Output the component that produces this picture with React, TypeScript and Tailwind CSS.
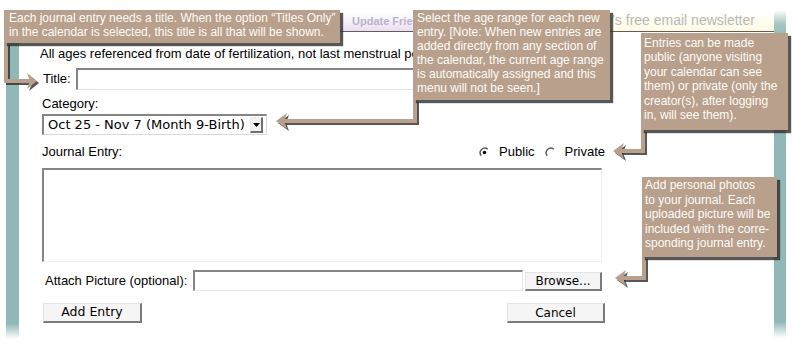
import React from "react";

const TAN = "bg-[#b9a08c]";

function Radio({ checked }: { checked?: boolean }) {
  return (
    <svg width="11" height="11" viewBox="0 0 11 11" className="flex-none">
      <path d="M2.2 8.8 A4.7 4.7 0 0 1 8.8 2.2" stroke="#5a5a5a" strokeWidth="1.4" fill="none" />
      {checked && <circle cx="5.5" cy="5.5" r="1.7" fill="#000" />}
    </svg>
  );
}

function Connectors() {
  const tan = "#b9a08c";
  const sh = "rgba(45,45,45,0.8)";
  const lines = [
    "M6 43 V81 H31",
    "M415 100 V121 H284",
    "M643 130 V151 H620",
    "M644 257 V278 H622",
  ];
  const heads = [
    "37,81 27,73 30,81 27,89",
    "276,121 287,113 284,121 287,129",
    "613,151 624,143 621,151 624,159",
    "615,278 626,270 623,278 626,286",
  ];
  return (
    <svg className="absolute left-0 top-0 pointer-events-none" width="792" height="360" viewBox="0 0 792 360">
      {lines.map((d, i) => (
        <path key={"s" + i} d={d} transform="translate(2,2)" stroke={sh} strokeWidth="4" fill="none" />
      ))}
      {heads.map((p, i) => (
        <polygon key={"hs" + i} points={p} transform="translate(2,2)" fill={sh} />
      ))}
      {lines.map((d, i) => (
        <path key={"l" + i} d={d} stroke={tan} strokeWidth="4" fill="none" />
      ))}
      {heads.map((p, i) => (
        <polygon key={"h" + i} points={p} fill={tan} />
      ))}
    </svg>
  );
}

const calloutBase =
  "absolute text-[12px] text-[#fdfbf8] whitespace-nowrap shadow-[3px_3px_1px_rgba(45,45,45,0.8)] " + TAN;

export default function App() {
  return (
    <div className="relative w-[792px] h-[360px] overflow-hidden bg-white text-black font-['Liberation_Sans',Arial,sans-serif]">
      <div className="flex h-full">
        <div className="w-[6px] flex-none" />
        <div className="w-[13px] flex-none mt-[28px] h-[311px] bg-[linear-gradient(to_bottom,#8fb8b6_0%,#8fb8b6_95%,#ffffff_100%)]" />
        <div className="flex-1 min-w-0">
          {/* top strip */}
          <div className="mt-[8px] ml-[321px] w-[434px] h-[24px] flex border-b border-[#5e5e5e]">
            <div className="w-[266px] flex items-center pt-[3px] pl-[12px] bg-[linear-gradient(to_bottom,#ffffff_20%,#e9def2_100%)]">
              <span className="block w-[61px] overflow-hidden text-[11px] font-bold text-[#bbb2ca] whitespace-nowrap">Update Friends</span>
            </div>
            <div className="flex-1 flex items-center pt-[1px] pl-[6px] bg-[linear-gradient(to_bottom,#ffffff_10%,#fffbe2_100%)]">
              <span className="text-[14px] text-[#b9b9b9] whitespace-nowrap">’s free email newsletter</span>
            </div>
          </div>

          {/* form */}
          <div className="pl-[23px]">
            <div className="mt-[14px] w-[373px] overflow-hidden h-[16px] leading-[16px] text-[13px] -ml-[2px] whitespace-nowrap">
              All ages referenced from date of fertilization, not last menstrual period (LMP).
            </div>

            <div className="mt-[6px] flex items-center h-[22px]">
              <label className="w-[34px] pl-[1px] text-[13px] leading-[16px]">Title:</label>
              <input
                type="text"
                className="w-[526px] h-[22px] bg-white border-t-2 border-l-2 border-r border-b border-t-[#858585] border-l-[#858585] border-r-[#e2e2e2] border-b-[#e2e2e2] outline-none"
              />
            </div>

            <div className="mt-[6px] h-[16px] leading-[16px] text-[13px]">Category:</div>

            <div className="mt-[2px] w-[225px] h-[21px] flex items-center bg-white border-t-2 border-l-2 border-r border-b border-t-[#858585] border-l-[#858585] border-r-[#d8d8d8] border-b-[#d8d8d8]">
              <span className="pl-[4px] text-[13px] leading-[16px] whitespace-nowrap font-['DejaVu_Sans',sans-serif]">
                Oct 25 - Nov 7 (Month 9-Birth)
              </span>
              <div className="ml-auto mr-[3px] w-[13px] h-[16px] flex items-center justify-center bg-[#f2f2f2] border-t border-l border-t-[#e8e8e8] border-l-[#e8e8e8] border-r-2 border-b-2 border-r-[#6f6f6f] border-b-[#6f6f6f]">
                <svg width="7" height="4" viewBox="0 0 7 4">
                  <polygon points="0,0 7,0 3.5,4" fill="#000" />
                </svg>
              </div>
            </div>

            <div className="mt-[9px] h-[16px] w-[563px] flex items-center text-[13px] leading-[16px]">
              <span>Journal Entry:</span>
              <div className="ml-auto flex items-center">
                <Radio checked />
                <span className="ml-[9px]">Public</span>
                <span className="ml-[10px] flex items-center">
                  <Radio />
                </span>
                <span className="ml-[9px]">Private</span>
              </div>
            </div>

            <textarea className="block mt-[8px] w-[560px] h-[94px] resize-none bg-white border-t-2 border-l-2 border-r border-b border-t-[#858585] border-l-[#858585] border-r-[#f0f0f0] border-b-[#f0f0f0] outline-none" />

            <div className="mt-[8px] flex items-end h-[21px]">
              <label className="self-center ml-[3px] w-[148px] text-[13px] leading-[16px] whitespace-nowrap">
                Attach Picture (optional):
              </label>
              <input
                type="text"
                className="w-[330px] h-[21px] bg-white border-t-2 border-l-2 border-r border-b border-t-[#858585] border-l-[#858585] border-r-[#e6e6e6] border-b-[#e6e6e6] outline-none"
              />
              <button className="ml-[2px] w-[77px] h-[19px] flex items-center justify-center bg-[#f5f5f5] border-t border-l border-t-[#e4e4e4] border-l-[#e4e4e4] border-r-2 border-b-2 border-r-[#7a7a7a] border-b-[#7a7a7a] text-[12px] font-['DejaVu_Sans',sans-serif]">
                Browse...
              </button>
            </div>

            <div className="mt-[12px] ml-[1px] w-[562px] flex justify-between">
              <button className="w-[99px] h-[20px] flex items-center justify-center bg-[#f5f5f5] border-t border-l border-t-[#e4e4e4] border-l-[#e4e4e4] border-r-2 border-b-2 border-r-[#7a7a7a] border-b-[#7a7a7a] text-[12.5px] font-['DejaVu_Sans',sans-serif]">
                Add Entry
              </button>
              <button className="w-[98px] h-[20px] flex items-center justify-center bg-[#f5f5f5] border-t border-l border-t-[#e4e4e4] border-l-[#e4e4e4] border-r-2 border-b-2 border-r-[#7a7a7a] border-b-[#7a7a7a] text-[12px] font-['DejaVu_Sans',sans-serif]">
                Cancel
              </button>
            </div>
          </div>
        </div>
        <div className="w-[12px] flex-none mt-[10px] h-[328px] bg-[linear-gradient(to_bottom,#ffffff_0%,#a9c9c5_4%,#8fb8b6_9%,#8fb8b6_95%,#ffffff_100%)]" />
        <div className="w-[6px] flex-none" />
      </div>

      <Connectors />

      <div className={calloutBase + " left-[4px] top-[10px] w-[336px] h-[33px] pl-[5px] pt-[1px] leading-[14px]"}>
        Each journal entry needs a title. When the option “Titles Only”
        <br />
        in the calendar is selected, this title is all that will be shown.
      </div>

      <div className={calloutBase + " left-[413px] top-[10px] w-[197px] h-[90px] pl-[4px] pt-[1px] leading-[14px]"}>
        Select the age range for each new
        <br />
        entry. [Note: When new entries are
        <br />
        added directly from any section of
        <br />
        the calendar, the current age range
        <br />
        is automatically assigned and this
        <br />
        menu will not be seen.]
      </div>

      <div className={calloutBase + " left-[641px] top-[33px] w-[147px] h-[97px] pl-[3px] pt-[3px] leading-[14.4px]"}>
        Entries can be made
        <br />
        public (anyone visiting
        <br />
        your calendar can see
        <br />
        them) or private (only the
        <br />
        creator(s), after logging
        <br />
        in, will see them).
      </div>

      <div className={calloutBase + " left-[642px] top-[177px] w-[135px] h-[80px] pl-[3px] pt-[1px] leading-[14.5px]"}>
        Add personal photos
        <br />
        to your journal. Each
        <br />
        uploaded picture will be
        <br />
        included with the corre-
        <br />
        sponding journal entry.
      </div>
    </div>
  );
}
